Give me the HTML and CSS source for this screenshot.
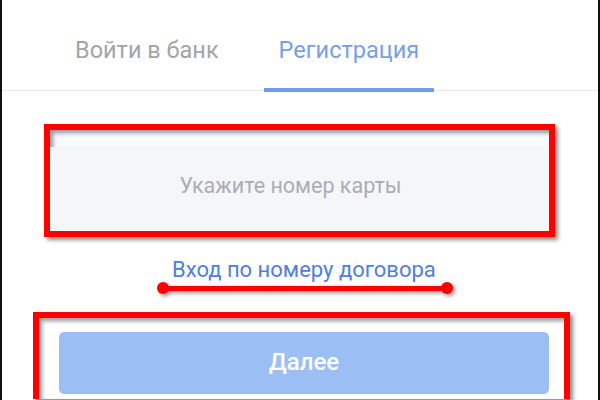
FILE: index.html
```html
<!DOCTYPE html>
<html lang="ru">
<head>
<meta charset="utf-8">
<link rel="stylesheet" href="styles.css">
</head>
<body>
<div class="frame">
  <nav class="tabs">
    <div class="tab">Войти в банк</div>
    <div class="tab active">Регистрация</div>
  </nav>
  <div class="content">
    <div class="mark mark-card">
      <div class="card-input">Укажите номер карты</div>
    </div>
    <a class="link">Вход по номеру договора</a>
    <div class="underline-mark"><span class="dot"></span><span class="bar"></span><span class="dot"></span></div>
    <div class="mark mark-btn">
      <div class="btn">Далее</div>
    </div>
  </div>
</div>
</body>
</html>
```
FILE: styles.css
```css
html, body {
  margin: 0;
  padding: 0;
  background: #ffffff;
}
body {
  width: 600px;
  height: 400px;
  overflow: hidden;
  font-family: Roboto, "Liberation Sans", sans-serif;
}
.frame {
  box-sizing: border-box;
  width: 600px;
  height: 400px;
  border-left: 2px solid #111;
  border-right: 2px solid #111;
  background: #fff;
}
.tabs {
  display: flex;
  align-items: flex-end;
  height: 90px;
  border-bottom: 1px solid #e7e8ea;
  padding-left: 57px;
  gap: 29px;
}
.tab {
  font-size: 23.5px;
  line-height: 28px;
  color: #a4a4a6;
  padding: 0 16px 26px;
}
.tab.active {
  color: #789fe6;
  border-bottom: 4px solid #6f9deb;
  margin-bottom: -2px;
  padding: 0 15px 24px;
}
.content {
  display: flex;
  flex-direction: column;
  align-items: flex-start;
}
.mark {
  box-sizing: border-box;
  border: 6px solid #ff0000;
  box-shadow: 3px 3px 4px rgba(0,0,0,0.45), inset 3px 3px 4px rgba(0,0,0,0.4);
}
.mark-card {
  margin: 33px 0 0 42px;
  width: 511px;
  height: 113px;
  padding-top: 17px;
  background: #f9fafb;
}
.card-input {
  height: 84px;
  background: #f5f6f8;
  border-top: 1px solid #eef0f2;
  box-sizing: border-box;
  display: flex;
  align-items: center;
  justify-content: center;
  padding-right: 18px;
  padding-bottom: 8px;
  font-size: 21.5px;
  color: #a9aeb6;
}
.link {
  margin: 20px 0 0 170px;
  font-size: 22px;
  line-height: 26px;
  color: #4e80de;
}
.underline-mark {
  display: flex;
  align-items: center;
  margin: -1px 0 0 155px;
  width: 296px;
  height: 12px;
  filter: drop-shadow(2px 2px 2px rgba(0,0,0,0.45));
}
.underline-mark .dot {
  width: 12px;
  height: 12px;
  border-radius: 50%;
  background: #ff0000;
  flex: none;
}
.underline-mark .bar {
  flex: 1;
  height: 5px;
  background: #ff0000;
  margin: 0 -2px;
}
.mark-btn {
  margin: 18px 0 0 31px;
  width: 537px;
  height: 87px;
  border-bottom: none;
  padding: 14px 15px 0 20px;
  background: #fff;
}
.btn {
  height: 62px;
  border-radius: 5px;
  background: #9bbff5;
  color: #ffffff;
  font-size: 24px;
  font-weight: 500;
  line-height: 60px;
  text-align: center;
}
```
